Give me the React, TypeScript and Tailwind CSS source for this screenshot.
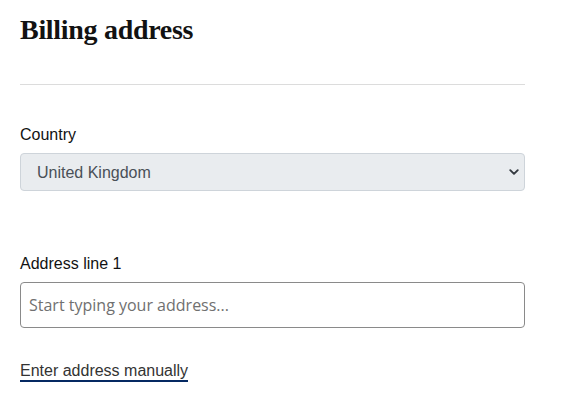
import React from 'react';

const Chevron = () => (
    <svg className="w-[10px] h-[10px]" viewBox="0 0 16 16">
        <path fill="none" stroke="#343a40" strokeWidth="3" strokeLinecap="round" strokeLinejoin="round" d="M2 5l6 6 6-6" />
    </svg>
);

export default function App() {
    return (
        <div className="bg-white min-h-[417px] px-5 pt-[13px] font-['Liberation_Sans',Arial,sans-serif] text-[#121212]">
            <div className="w-[505px]">
                <h2 className="font-['Liberation_Serif',serif] font-bold text-[28px] leading-[33px] tracking-[-0.3px]">
                    Billing address
                </h2>

                <hr className="mt-[38px] border-0 border-t border-[#dcdcdc]" />

                {/* --- Country --- */}
                <div className="mt-[38px]">
                    <label className="block text-[16px] leading-[24px]">Country</label>
                    <div className="relative mt-[6px]">
                        <select
                            defaultValue="GB"
                            className="appearance-none w-full h-[38px] pl-[16px] pr-8 pt-[2px] bg-[#e9ecef] border border-[#ced4da] rounded-[4px] text-[16px] text-[#495057] outline-none"
                        >
                            <option value="GB">United Kingdom</option>
                        </select>
                        <span className="absolute right-[6px] top-[14px] pointer-events-none">
                            <Chevron />
                        </span>
                    </div>
                </div>

                {/* --- Address line 1 --- */}
                <div className="mt-[61px]">
                    <label className="block text-[16px] leading-[24px]">Address line 1</label>
                    <input
                        type="text"
                        placeholder="Start typing your address..."
                        className="mt-[6px] w-full h-[46px] px-[8px] border border-[#8a8a8a] rounded-[4px] font-['Open_Sans',sans-serif] text-[16px] placeholder:text-[#707070] outline-none"
                    />
                </div>

                <div className="mt-[31px]">
                    <a href="#" className="text-[16px] leading-[20px] text-[#333] border-b-2 border-[#052962] pb-[1px]">
                        Enter address manually
                    </a>
                </div>
            </div>
        </div>
    );
}
